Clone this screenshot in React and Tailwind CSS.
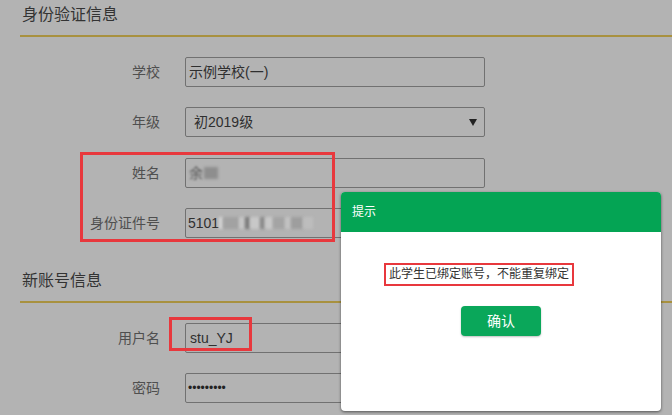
import React from 'react';

const font = { fontFamily: '"Liberation Sans", "Noto Sans CJK SC", sans-serif' };

function Field({ label, children, className = '', pad = 'pl-[3px]' }) {
  return (
    <div className={`flex items-center h-[30px] ${className}`}>
      <div className="w-[140px] text-right text-[14px] text-[#4f4f4f]">{label}</div>
      <div className={`ml-[25px] w-[300px] h-[30px] border border-[#717171] rounded-[2px] flex items-center ${pad} text-[14px] text-[#2f2f2f] relative`}>
        {children}
      </div>
    </div>
  );
}

function Heading({ children, className = '' }) {
  return (
    <div className={`pt-[5px] pb-[10px] border-b-2 border-[#a8913f] ${className}`}>
      <div className="pl-[2px] text-[16px] leading-[20px] text-[#333]">{children}</div>
    </div>
  );
}

function Blur({ w, shade }) {
  return <span className={`inline-block h-[12px] blur-[1.5px] ${w} ${shade}`} />;
}

export default function App() {
  return (
    <div className="relative w-[672px] h-[415px] overflow-hidden bg-[#b3b3b3]" style={font}>
      <div className="pl-[20px]">
        <Heading>身份验证信息</Heading>

        <Field label="学校" className="mt-[20px]">示例学校(一)</Field>
        <Field label="年级" className="mt-[20px]" pad="pl-[8px] pr-[7px] justify-between">
          <span>初2019级</span>
          <svg width="8" height="7" viewBox="0 0 8 7"><polygon points="0,0 8,0 4,7" fill="#222" /></svg>
        </Field>
        <Field label="姓名" className="mt-[21px]">
          <span className="blur-[0.8px] text-[#555]">余</span>
          <Blur w="w-[14px] ml-[1px]" shade="bg-[#8e8e8e]" />
        </Field>
        <Field label="身份证件号" className="mt-[20px]" pad="pl-[2px]">
          <span>5101</span>
          <span className="flex items-center">
            <Blur w="w-[4px]" shade="bg-[#d6d6d6]" />
            <Blur w="w-[16px]" shade="bg-[#a2a2a2]" />
            <Blur w="w-[6px]" shade="bg-[#c6c6c6]" />
            <Blur w="w-[5px]" shade="bg-[#7c7c7c]" />
            <Blur w="w-[10px]" shade="bg-[#c8c8c8]" />
            <Blur w="w-[5px]" shade="bg-[#8a8a8a]" />
            <Blur w="w-[8px]" shade="bg-[#c8c8c8]" />
            <Blur w="w-[12px]" shade="bg-[#a4a4a4]" />
            <Blur w="w-[6px]" shade="bg-[#c2c2c2]" />
            <Blur w="w-[12px]" shade="bg-[#9e9e9e]" />
            <Blur w="w-[10px]" shade="bg-[#bdbdbd]" />
          </span>
        </Field>

        <Heading className="mt-[28px]">新账号信息</Heading>
        <Field label="用户名" className="mt-[20px]" pad="pl-[4px]">stu_YJ</Field>
        <Field label="密码" className="mt-[20px]" pad="pl-[2px]">
          <span className="text-[12px] text-[#222]">•••••••••</span>
        </Field>
      </div>

      {/* annotation boxes */}
      <div className="absolute left-[80px] top-[152px] w-[255px] h-[90px] border-[3px] border-[#e8383d]" />
      <div className="absolute left-[169px] top-[317px] w-[83px] h-[34px] border-[3px] border-[#e8383d]" />

      {/* dialog */}
      <div className="absolute left-[341px] top-[192px] w-[320px] h-[219px] bg-white rounded-[4px] shadow-[0_1px_3px_rgba(0,0,0,0.55)] overflow-hidden">
        <div className="h-[40px] bg-[#04a454] flex items-center pl-[11px] text-[12px] text-white">提示</div>
        <div className="pt-[29px]">
          <span className="inline-block ml-[43px] border-[2px] border-[#e8383d] px-[3px] leading-[19px] text-[12px] text-[#333]">
            此学生已绑定账号，不能重复绑定
          </span>
          <div className="mt-[20px] mx-auto w-[80px] h-[30px] rounded-[4px] bg-[#0aa75a] shadow-[0_1px_2px_rgba(0,0,0,0.25)] flex items-center justify-center text-[14px] text-white">
            确认
          </div>
        </div>
      </div>
    </div>
  );
}
